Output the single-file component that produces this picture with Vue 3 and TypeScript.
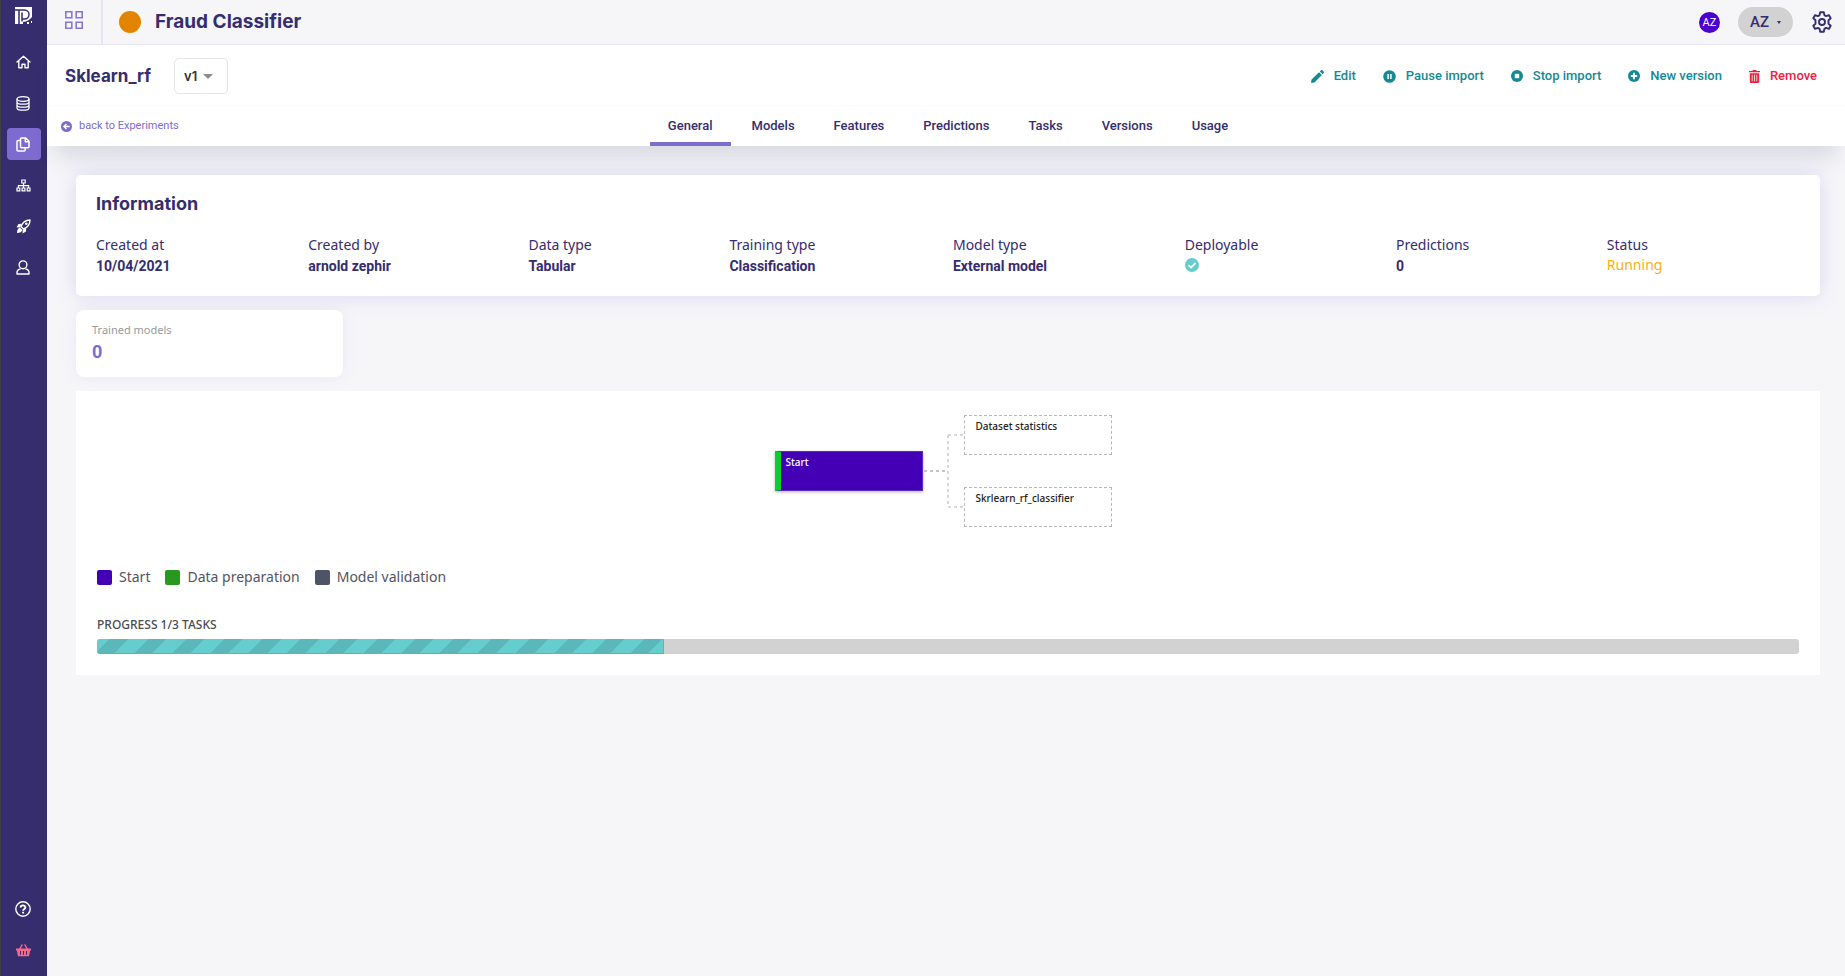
<script setup lang="ts">
import { ref } from 'vue'

interface Field {
  label: string
  value?: string
  kind?: 'check' | 'status'
}

const tabs: string[] = ['General', 'Models', 'Features', 'Predictions', 'Tasks', 'Versions', 'Usage']
const activeTab = ref('General')
const version = ref('v1')

const fields: Field[] = [
  { label: 'Created at', value: '10/04/2021' },
  { label: 'Created by', value: 'arnold zephir' },
  { label: 'Data type', value: 'Tabular' },
  { label: 'Training type', value: 'Classification' },
  { label: 'Model type', value: 'External model' },
  { label: 'Deployable', kind: 'check' },
  { label: 'Predictions', value: '0' },
  { label: 'Status', value: 'Running', kind: 'status' },
]

const legend = [
  { label: 'Start', tone: 'start' },
  { label: 'Data preparation', tone: 'prep' },
  { label: 'Model validation', tone: 'validation' },
]

const done = 1
const total = 3
</script>

<template>
  <div class="app">
    <nav class="sidebar" aria-label="Main">
      <a class="logo" href="#" aria-label="Home page">
        <svg width="17" height="17" viewBox="0 0 17 17">
          <path fill="#fff" d="M0 0h17v17h-17z" />
          <path fill="none" stroke="#352d6d" stroke-width="1.500" d="M0 3h9.500a4 4 0 0 1 0 9H7.500M4 3v14M7 5.500v9" />
          <path fill="#352d6d" d="M8 17v-2c4-.5 6.500-2 9-5v4h-1v2h1v1h-3v-2h-2v2z" />
        </svg>
      </a>
      <a class="nav-item" href="#" aria-label="Dashboard">
        <svg width="15" height="14" viewBox="0 0 15 14" fill="none" stroke="#fff" stroke-width="1.400" stroke-linejoin="round" stroke-linecap="round">
          <path d="M1 7l6.500-5.800L14 7M2.800 6v6.800h3.200V9.200h3v3.600h3.200V6" />
        </svg>
      </a>
      <a class="nav-item" href="#" aria-label="Data">
        <svg width="14" height="15" viewBox="0 0 14 15" fill="none" stroke="#fff" stroke-width="1.300">
          <ellipse cx="7" cy="3" rx="6" ry="2.300" />
          <path d="M1 3v9c0 1.200 2.700 2.200 6 2.200s6-1 6-2.200V3M1 6c0 1.200 2.700 2.200 6 2.200s6-1 6-2.200M1 9c0 1.200 2.700 2.200 6 2.200s6-1 6-2.200" />
        </svg>
      </a>
      <a class="nav-item active" href="#" aria-label="Experiments">
        <svg width="14" height="15" viewBox="0 0 14 15" fill="none" stroke="#fff" stroke-width="1.500" stroke-linejoin="round">
          <path d="M5.500 1h4.300l3.200 3.200v5.600a1 1 0 0 1-1 1H5.500a1 1 0 0 1-1-1V2a1 1 0 0 1 1-1zM9.300 1v3.700H13M4.500 3.500H2a1 1 0 0 0-1 1V13a1 1 0 0 0 1 1h6.200a1 1 0 0 0 1-1v-2.200" />
        </svg>
      </a>
      <a class="nav-item" href="#" aria-label="Pipelines">
        <svg width="15" height="13" viewBox="0 0 15 13" fill="none" stroke="#fff" stroke-width="1.200">
          <path d="M5.800 1h3.400v3H5.800zM1 9h2.800v2.800H1zM6.100 9h2.800v2.800H6.100zM11.200 9H14v2.800h-2.800zM7.500 4v5M2.400 9V6.600h10.200V9" />
        </svg>
      </a>
      <a class="nav-item" href="#" aria-label="Deployments">
        <svg width="15" height="15" viewBox="0 0 15 15">
          <path fill="none" stroke="#fff" stroke-width="1.400" stroke-linejoin="round" d="M5 7.500C6.500 3.500 9.500 1 14 1c0 4.500-2.500 7.500-6.500 9z" />
          <path fill="#fff" d="M5.500 4.800L2.500 5 .5 8.500l3.700-.3zM10.200 9.500l-.2 3L6.500 14.500l.3-3.700zM4 8.500l2.500 2.500c-.8 1.800-2.500 3-5.500 3 0-3 1-4.800 3-5.500z" />
          <circle cx="10.300" cy="4.700" r="1.300" fill="#fff" />
        </svg>
      </a>
      <a class="nav-item" href="#" aria-label="Account">
        <svg width="14" height="15" viewBox="0 0 14 15" fill="none" stroke="#fff" stroke-width="1.400">
          <circle cx="7" cy="4.800" r="3.900" />
          <path stroke-linejoin="round" d="M4.500 9C2 9.400 1 10.800 1 12.600V14h12v-1.400C13 10.800 12 9.400 9.500 9" />
        </svg>
      </a>
      <a class="nav-item bottom" href="#" aria-label="Help">
        <svg width="16" height="16" viewBox="0 0 16 16" fill="none" stroke="#fff">
          <circle cx="8" cy="8" r="7.200" stroke-width="1.400" />
          <path stroke-width="1.900" d="M5.600 6.500C5.600 3.800 10.400 3.700 10.400 6.400c0 1.600-2.300 1.600-2.300 3.300M8.100 10.700v1.900" />
        </svg>
      </a>
      <a class="nav-item" href="#" aria-label="Store">
        <svg width="15" height="13" viewBox="0 0 15 13">
          <path fill="none" stroke="#f4688c" stroke-width="1.500" stroke-linecap="round" d="M3.500 5.500L6 1M11.500 5.500L9 1" />
          <path fill="#f4688c" d="M0 4.500h15v1.900h-.8L13 12.300H2L.8 6.400H0z" />
          <path stroke="#352d6d" stroke-width="1" d="M4.500 7v3.800M7.500 7v3.800M10.500 7v3.800" />
        </svg>
      </a>
    </nav>

    <div class="main">
      <header class="topbar">
        <a class="apps" href="#" aria-label="Projects">
          <svg width="18" height="18" viewBox="0 0 18 18" fill="none" stroke="#8677d3" stroke-width="1.600">
            <path d="M.8.800h6v6h-6zM11.200.800h6v6h-6zM.8 11.200h6v6h-6zM11.200 11.200h6v6h-6z" />
          </svg>
        </a>
        <span class="dot"></span>
        <h1 class="project">Fraud Classifier</h1>
        <span class="avatar">AZ</span>
        <button class="account" type="button">AZ <span class="tick"></span></button>
        <button class="gear" type="button" aria-label="Settings">
          <svg width="20" height="22" viewBox="0 0 20 22" fill="none" stroke="#352d6d" stroke-width="1.900" stroke-linejoin="round">
            <path d="M8.200 1.200h3.600l.6 2.900 1.700 1 2.800-1 1.800 3.100-2.200 2v3.600l2.200 2-1.800 3.100-2.800-1-1.700 1-.6 2.900H8.200l-.6-2.900-1.700-1-2.800 1-1.800-3.100 2.200-2V9.200l-2.200-2 1.800-3.100 2.800 1 1.700-1z" />
            <circle cx="10" cy="11" r="3" />
          </svg>
        </button>
      </header>

      <section class="pagehead">
        <div class="titlebar">
          <h2 class="name">Sklearn_rf</h2>
          <label class="version">
            <select v-model="version" aria-label="Version">
              <option>v1</option>
            </select>
            <span class="caret"></span>
          </label>
          <div class="actions">
            <button type="button" class="action">
              <svg width="13" height="13" viewBox="0 0 13 13" fill="#148a94"><path d="M0 13l.6-3.400L8 2.200l2.900 2.900-7.400 7.300zM8.800 1.400L10 .3a1 1 0 0 1 1.400 0l1.300 1.400a1 1 0 0 1 0 1.300l-1.100 1.200z" /></svg>
              Edit
            </button>
            <button type="button" class="action">
              <svg width="13" height="13" viewBox="0 0 13 13"><circle cx="6.500" cy="6.500" r="6.300" fill="#148a94" /><path stroke="#fff" stroke-width="1.500" d="M5.100 4v5M7.900 4v5" /></svg>
              Pause import
            </button>
            <button type="button" class="action">
              <svg width="12" height="12" viewBox="0 0 12 12"><circle cx="6" cy="6" r="6" fill="#148a94" /><path fill="#fff" d="M3.800 3.800h4.400v4.400H3.800z" /></svg>
              Stop import
            </button>
            <button type="button" class="action">
              <svg width="12" height="12" viewBox="0 0 12 12"><circle cx="6" cy="6" r="6" fill="#148a94" /><path stroke="#fff" stroke-width="1.800" d="M2.800 6h6.400M6 2.800v6.400" /></svg>
              New version
            </button>
            <button type="button" class="action danger">
              <svg width="11" height="13" viewBox="0 0 11 13"><path fill="#f0203f" d="M0 1h3.300L4 0h3l.7 1H11v1.300H0zM.8 3.200h9.400V12a1 1 0 0 1-1 1H1.800a1 1 0 0 1-1-1z" /><path stroke="#fff" stroke-width=".8" d="M3.200 4.700v6.600M5.500 4.700v6.600M7.800 4.700v6.600" /></svg>
              Remove
            </button>
          </div>
        </div>
        <div class="tabbar">
          <a class="back" href="#">
            <svg width="11" height="11" viewBox="0 0 11 11"><circle cx="5.500" cy="5.500" r="5.500" fill="#7d6bd0" /><path fill="none" stroke="#fff" stroke-width="1.400" d="M8.700 5.500H3M5.500 2.900L2.900 5.500l2.600 2.600" /></svg>
            back to Experiments
          </a>
          <div class="tabs" role="tablist">
            <button
              v-for="tab in tabs"
              :key="tab"
              type="button"
              role="tab"
              class="tab"
              :class="{ selected: tab === activeTab }"
              :aria-selected="tab === activeTab"
              @click="activeTab = tab"
            >{{ tab }}</button>
          </div>
        </div>
      </section>

      <main class="content">
        <section class="card info">
          <h3 class="info-title">Information</h3>
          <dl class="fields">
            <div v-for="f in fields" :key="f.label" class="field">
              <dt>{{ f.label }}</dt>
              <dd v-if="f.kind === 'check'">
                <svg class="check" role="img" aria-label="Yes" width="14" height="14" viewBox="0 0 14 14"><circle cx="7" cy="7" r="7" fill="#66cdcf" /><path fill="none" stroke="#fff" stroke-width="1.800" d="M3.500 7.200L6 9.600l4.600-4.800" /></svg>
              </dd>
              <dd v-else :class="{ status: f.kind === 'status' }">{{ f.value }}</dd>
            </div>
          </dl>
        </section>

        <section class="stat">
          <span class="stat-label">Trained models</span>
          <strong class="stat-value">0</strong>
        </section>

        <section class="pipeline">
          <div class="graph">
            <div class="node start">Start</div>
            <svg class="links" width="41" height="112" viewBox="0 0 41 112" fill="none" stroke="#d8d8d8" stroke-width="2" stroke-dasharray="3 3">
              <path stroke="#c4c4c4" d="M1 56h24" />
              <path d="M25 20v72M25 20h16M25 92h16" />
            </svg>
            <div class="targets">
              <div class="node pending">Dataset statistics</div>
              <div class="node pending">Skrlearn_rf_classifier</div>
            </div>
          </div>
          <ul class="legend">
            <li v-for="l in legend" :key="l.label"><span class="swatch" :class="l.tone"></span>{{ l.label }}</li>
          </ul>
          <p class="progress-label">PROGRESS {{ done }}/{{ total }} TASKS</p>
          <div class="track" role="progressbar" aria-label="Tasks" :aria-valuenow="done" :aria-valuemax="total">
            <div class="fill" :style="{ width: (done / total) * 100 + '%' }"></div>
          </div>
        </section>
      </main>
    </div>
  </div>
</template>

<style>
body {
  margin: 0;
  background: #f6f6f9;
}
</style>

<style scoped>
.app {
  display: flex;
  min-height: 100vh;
  font-family: "Noto Sans", "Open Sans", sans-serif;
  color: #352d6d;
}
.app * {
  box-sizing: border-box;
}
button {
  border: 0;
  padding: 0;
  background: none;
  font: inherit;
  color: inherit;
  cursor: pointer;
}
a {
  text-decoration: none;
}
svg {
  display: block;
  flex: none;
}

.sidebar {
  flex: none;
  width: 47px;
  display: flex;
  flex-direction: column;
  align-items: center;
  gap: 9px;
  padding: 7px 0 10px;
  border-left: 1px solid #3c4247;
  background: #352d6d;
}
.logo {
  margin-bottom: 13px;
  padding-right: 2px;
}
.nav-item {
  display: flex;
  align-items: center;
  justify-content: center;
  width: 34px;
  height: 32px;
  padding-right: 2px;
  border-radius: 4px;
}
.nav-item.active {
  background: #7d6bd0;
}
.nav-item.bottom {
  margin-top: auto;
}

.main {
  flex: 1;
  min-width: 0;
}
.topbar {
  display: flex;
  align-items: center;
  height: 45px;
  padding-right: 13px;
  border-bottom: 1px solid #e6e5f1;
}
.apps {
  align-self: stretch;
  display: flex;
  align-items: center;
  width: 56px;
  padding: 0 0 4px 18px;
  border-right: 2px solid #e6e5f1;
}
.dot {
  width: 22px;
  height: 22px;
  margin: 0 14px 0 16px;
  border-radius: 50%;
  background: #e28400;
}
.project {
  flex: 1;
  margin: 0;
  font: 700 19px/24px Inter, sans-serif;
}
.avatar {
  width: 21px;
  height: 21px;
  border-radius: 50%;
  background: #4a00cf;
  color: #fff;
  font: 11px/21px Roboto, sans-serif;
  text-align: center;
}
.account {
  display: flex;
  align-items: center;
  justify-content: center;
  gap: 8px;
  width: 55px;
  height: 30px;
  margin: 0 19px 0 18px;
  border-radius: 15px;
  background: #d2d2d2;
  font: 500 15px/30px Roboto, sans-serif;
}
.tick {
  border: 2px solid transparent;
  border-top: 3px solid #352d6d;
  border-bottom: 0;
}

.pagehead {
  background: #fff;
  box-shadow: 0 20px 20px -8px rgba(40, 50, 90, 0.14);
}
.titlebar {
  display: flex;
  align-items: center;
  height: 61px;
  padding: 2px 28px 0 18px;
  border-bottom: 1px solid #fafafc;
}
.name {
  margin: 0;
  font: 700 17px/24px Inter, sans-serif;
}
.version {
  display: grid;
  margin-left: 23px;
}
.version select,
.caret {
  grid-area: 1 / 1;
}
.version select {
  width: 54px;
  height: 36px;
  padding: 0 0 0 9px;
  border: 1px solid #e6e5f1;
  border-radius: 5px;
  background: #fff;
  appearance: none;
  font: 600 13px/20px Inter, sans-serif;
  color: #333;
}
.caret {
  place-self: center end;
  margin-right: 15px;
  border: 5px solid transparent;
  border-top-color: #8c8c8c;
  border-bottom: 0;
  pointer-events: none;
}
.actions {
  display: flex;
  gap: 27px;
  margin-left: auto;
}
.action {
  display: flex;
  align-items: center;
  gap: 10px;
  font: 500 13px/20px Roboto, sans-serif;
  color: #148a94;
}
.action.danger {
  color: #f0203f;
}
.tabbar {
  display: grid;
  grid-template-columns: 1fr auto 1fr;
  height: 40px;
}
.back {
  display: flex;
  align-items: center;
  gap: 7px;
  padding-left: 14px;
  font: 11px/16px Roboto, sans-serif;
  color: #7d6bd0;
}
.tabs {
  display: flex;
  gap: 3px;
  padding-left: 4px;
}
.tab {
  padding: 4px 18px 0;
  border-bottom: 4px solid transparent;
  font: 500 13px/20px Roboto, sans-serif;
}
.tab.selected {
  border-color: #7d6bd0;
}

.content {
  display: flex;
  flex-direction: column;
  gap: 14px;
  padding: 29px 25px 29px 29px;
}
.card {
  border-radius: 5px;
  background: #fff;
  box-shadow: 0 0 20px rgba(125, 107, 208, 0.22);
}
.info {
  padding: 19px 20px;
}
.info-title {
  margin: 0 0 19px;
  font: 700 18px/20px Inter, sans-serif;
}
.fields {
  display: flex;
  margin: 0;
}
.field {
  flex: 1 1 auto;
}
dt {
  font-size: 14px;
  line-height: 23px;
}
dd {
  margin: 0;
  font: 700 14px/21px Roboto, sans-serif;
}
dd.status {
  font: 14px/18px "Noto Sans", sans-serif;
  color: #fcb010;
}
.check {
  margin-top: 2px;
}
.stat {
  display: flex;
  flex-direction: column;
  align-self: flex-start;
  width: 267px;
  padding: 11px 16px 12px;
  border-radius: 8px;
  background: #fff;
  box-shadow: 0 0 16px rgba(125, 107, 208, 0.1);
}
.stat-label {
  font-size: 11px;
  line-height: 18px;
  color: #999;
}
.stat-value {
  font: 700 18px/26px Roboto, sans-serif;
  color: #7d6bd0;
}
.pipeline {
  padding: 24px 21px 21px;
  background: #fff;
}
.graph {
  display: flex;
  align-items: center;
  justify-content: center;
  padding-right: 10px;
}
.node {
  width: 148px;
  height: 40px;
  font-size: 10px;
  font-weight: 500;
  line-height: 20px;
}
.node.start {
  padding: 0 5px;
  border: 1px solid #5a2cbf;
  border-left: 6px solid #06d02f;
  background: #4300b5;
  color: #fff;
  box-shadow: 0 1px 3px rgba(0, 0, 0, 0.3);
}
.node.pending {
  padding: 0 11px;
  border: 1px dashed #b8b8b8;
  color: #222;
}
.targets {
  display: flex;
  flex-direction: column;
  gap: 32px;
}
.legend {
  display: flex;
  gap: 15px;
  margin: 40px 0 0;
  padding: 0;
  list-style: none;
  font-size: 14px;
  line-height: 20px;
  color: #54545c;
}
.legend li {
  display: flex;
  align-items: center;
  gap: 7px;
}
.swatch {
  width: 15px;
  height: 15px;
  border-radius: 2px;
}
.swatch.start {
  background: #4300b5;
}
.swatch.prep {
  background: #28991f;
}
.swatch.validation {
  background: #4f5368;
}
.progress-label {
  margin: 28px 0 4px;
  font-size: 12px;
  font-weight: 500;
  line-height: 20px;
  color: #4b4b52;
}
.track {
  height: 15px;
  border-radius: 3px;
  background: #d2d2d2;
  overflow: hidden;
}
.fill {
  height: 100%;
  border: solid #56b9bb;
  border-width: 0 1px 1px 0;
  background: repeating-linear-gradient(-45deg, #66cdcf 0 10px, #5bb8ba 10px 23px, #66cdcf 23px 27px);
}
</style>
